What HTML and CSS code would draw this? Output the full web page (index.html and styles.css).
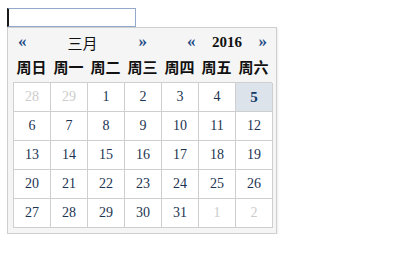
FILE: index.html
```html
<!DOCTYPE html>
<html>
<head>
<meta charset="utf-8">
<link rel="stylesheet" href="styles.css">
</head>
<body>
<div class="wrap">
  <input class="date-input" type="text" value="">
  <div class="cal">
    <div class="nav">
      <div class="grp grp-month">
        <span class="arrow">«</span>
        <span class="label">三月</span>
        <span class="arrow">»</span>
      </div>
      <div class="grp grp-year">
        <span class="arrow">«</span>
        <span class="label year">2016</span>
        <span class="arrow">»</span>
      </div>
    </div>
    <div class="week">
      <span>周日</span><span>周一</span><span>周二</span><span>周三</span><span>周四</span><span>周五</span><span>周六</span>
    </div>
    <div class="days">
      <span class="d off">28</span><span class="d off">29</span><span class="d">1</span><span class="d">2</span><span class="d">3</span><span class="d">4</span><span class="d today">5</span>
      <span class="d">6</span><span class="d">7</span><span class="d">8</span><span class="d">9</span><span class="d">10</span><span class="d">11</span><span class="d">12</span>
      <span class="d">13</span><span class="d">14</span><span class="d">15</span><span class="d">16</span><span class="d">17</span><span class="d">18</span><span class="d">19</span>
      <span class="d">20</span><span class="d">21</span><span class="d">22</span><span class="d">23</span><span class="d">24</span><span class="d">25</span><span class="d">26</span>
      <span class="d">27</span><span class="d">28</span><span class="d">29</span><span class="d">30</span><span class="d">31</span><span class="d off">1</span><span class="d off">2</span>
    </div>
  </div>
</div>
</body>
</html>
```
FILE: styles.css
```css
html, body {
  margin: 0;
  padding: 0;
  background: #ffffff;
}
body {
  font-family: "Liberation Serif", "Noto Sans CJK SC", serif;
}
.wrap {
  padding: 8px 0 0 7px;
  width: 270px;
}
.date-input {
  display: block;
  box-sizing: border-box;
  width: 129px;
  height: 19px;
  margin: 0;
  padding: 0 2px;
  border: 1px solid #93a9c9;
  border-left: 2px solid #1a1a1a;
  outline: none;
  background: #fff;
}
.cal {
  box-sizing: border-box;
  width: 270px;
  height: 207px;
  border: 1px solid #cfcfcf;
  background: #f5f5f5;
  padding: 0 5px;
  box-shadow: 1px 1px 2px rgba(0,0,0,0.08);
}
.nav {
  display: flex;
  height: 28px;
  align-items: center;
  justify-content: space-between;
}
.grp {
  display: flex;
  align-items: center;
  justify-content: space-between;
  box-sizing: border-box;
  padding: 0 4px 0 5px;
}
.grp-month { width: 138px; }
.grp-year { width: 89px; }
.arrow {
  color: #1c4a85;
  font-weight: bold;
  font-size: 17px;
  line-height: 20px;
}
.label {
  color: #111;
  font-size: 15px;
  font-family: "Noto Sans CJK SC", sans-serif;
}
.label.year {
  font-family: "Liberation Serif", serif;
  font-weight: bold;
  font-size: 15px;
}
.week {
  display: grid;
  grid-template-columns: repeat(7, 37px);
  height: 22px;
  margin-bottom: 4px;
  align-items: center;
}
.week span {
  text-align: center;
  font-family: "Noto Sans CJK SC", sans-serif;
  font-weight: bold;
  font-size: 15px;
  color: #111;
  line-height: 22px;
}
.days {
  display: grid;
  grid-template-columns: repeat(7, 37px);
  grid-auto-rows: 29px;
  border-top: 1px solid #cfcfcf;
  border-left: 1px solid #cfcfcf;
  background: #fff;
  width: 259px;
  box-sizing: border-box;
}
.d {
  display: flex;
  align-items: center;
  justify-content: center;
  border-right: 1px solid #cfcfcf;
  border-bottom: 1px solid #cfcfcf;
  font-size: 14px;
  color: #1c3452;
  background: #fff;
}
.d.off {
  color: #cccccc;
}
.d.today {
  background: #dce3eb;
  font-weight: bold;
  font-size: 15px;
  color: #123a66;
}
```
